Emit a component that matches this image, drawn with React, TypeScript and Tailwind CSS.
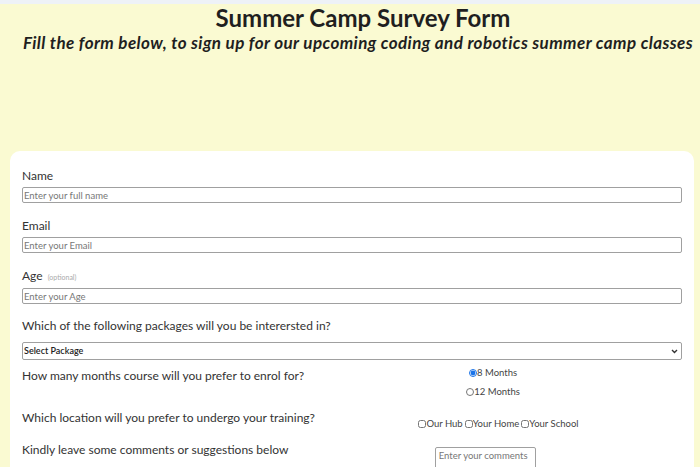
import React from "react";

export default function App() {
  return (
    <div className="min-h-screen bg-[#eef2f7] pt-[4px] font-['Lato',sans-serif] text-[#333]">
      <div className="bg-[#fafad2] min-h-[463px] pb-[20px]">
        {/* Heading */}
        <header className="text-center pl-[16px]">
          <h1 className="pl-[10px] text-[24px] font-bold leading-[28px] text-[#1f1f1f]">
            Summer Camp Survey Form
          </h1>
          <p className="text-[17px] font-bold italic leading-[22px] tracking-[0.4px] text-[#1f1f1f]">
            Fill the form below, to sign up for our upcoming coding and robotics summer camp classes
          </p>
        </header>

        {/* Form card */}
        <form className="mt-[97px] ml-[10px] mr-[6px] bg-white rounded-[10px] px-[12px] pt-[16px] pb-[30px]">
          <label className="block text-[12px] leading-[18px]">Name</label>
          <input
            type="text"
            placeholder="Enter your full name"
            className="mt-[2px] block w-full h-[16px] border border-[#a0a0a0] rounded-[2px] px-[1px] text-[9.5px] placeholder:text-[#777]"
          />

          <label className="mt-[14px] block text-[12px] leading-[18px]">Email</label>
          <input
            type="email"
            placeholder="Enter your Email"
            className="mt-[2px] block w-full h-[16px] border border-[#a0a0a0] rounded-[2px] px-[1px] text-[9.5px] placeholder:text-[#777]"
          />

          <label className="mt-[14px] block text-[12px] leading-[18px]">
            Age <span className="ml-[2px] text-[7px] text-[#aaa]">(optional)</span>
          </label>
          <input
            type="number"
            placeholder="Enter your Age"
            className="mt-[2px] block w-full h-[16px] border border-[#a0a0a0] rounded-[2px] px-[1px] text-[9.5px] placeholder:text-[#777]"
          />

          <label className="mt-[13px] block text-[12px] leading-[18px]">
            Which of the following packages will you be interersted in?
          </label>
          <div className="mt-[7px] relative">
            <select className="block w-full h-[18px] appearance-none border border-[#a0a0a0] rounded-[2px] pl-[1px] text-[9px] font-semibold text-[#222] bg-white">
              <option>Select Package</option>
            </select>
            <svg
              className="absolute right-[4px] top-[7px] pointer-events-none"
              width="7"
              height="5"
              viewBox="0 0 7 5"
            >
              <path d="M1 1l2.5 2.5L6 1" stroke="#333" strokeWidth="1.4" fill="none" />
            </svg>
          </div>

          <div className="mt-[7px] flex items-start">
            <span className="text-[12px] leading-[18px]">
              How many months course will you prefer to enrol for?
            </span>
            <div className="-mt-[4px] flex-1 flex flex-col items-center text-[9.5px] leading-[19px] text-[#444]">
              <label className="flex items-center">
                <input
                  type="radio"
                  name="months"
                  defaultChecked
                  className="m-0 w-[8px] h-[8px] accent-[#1a73e8]"
                />
                8 Months
              </label>
              <label className="flex items-center">
                <input type="radio" name="months" className="m-0 w-[8px] h-[8px]" />
                12 Months
              </label>
            </div>
          </div>

          <div className="mt-[8px] flex items-start">
            <span className="text-[12px] leading-[18px]">
              Which location will you prefer to undergo your training?
            </span>
            <div className="flex-1 flex justify-center items-center pt-[6px] text-[9.5px] leading-[18px] text-[#444]">
              <label className="flex items-center">
                <input type="checkbox" className="m-0 w-[8px] h-[8px]" />
                Our Hub
              </label>
              <label className="flex items-center ml-[2px]">
                <input type="checkbox" className="m-0 w-[8px] h-[8px]" />
                Your Home
              </label>
              <label className="flex items-center ml-[2px]">
                <input type="checkbox" className="m-0 w-[8px] h-[8px]" />
                Your School
              </label>
            </div>
          </div>

          <div className="mt-[8px] flex items-start">
            <span className="text-[12px] leading-[18px]">
              Kindly leave some comments or suggestions below
            </span>
            <div className="flex-1 flex justify-center pt-[6px]">
              <textarea
                placeholder="Enter your comments"
                className="w-[101px] h-[40px] border border-[#a0a0a0] rounded-[2px] px-[3px] py-[2px] text-[9.5px] leading-[12px] resize-none placeholder:text-[#777]"
              />
            </div>
          </div>
        </form>
      </div>
    </div>
  );
}
